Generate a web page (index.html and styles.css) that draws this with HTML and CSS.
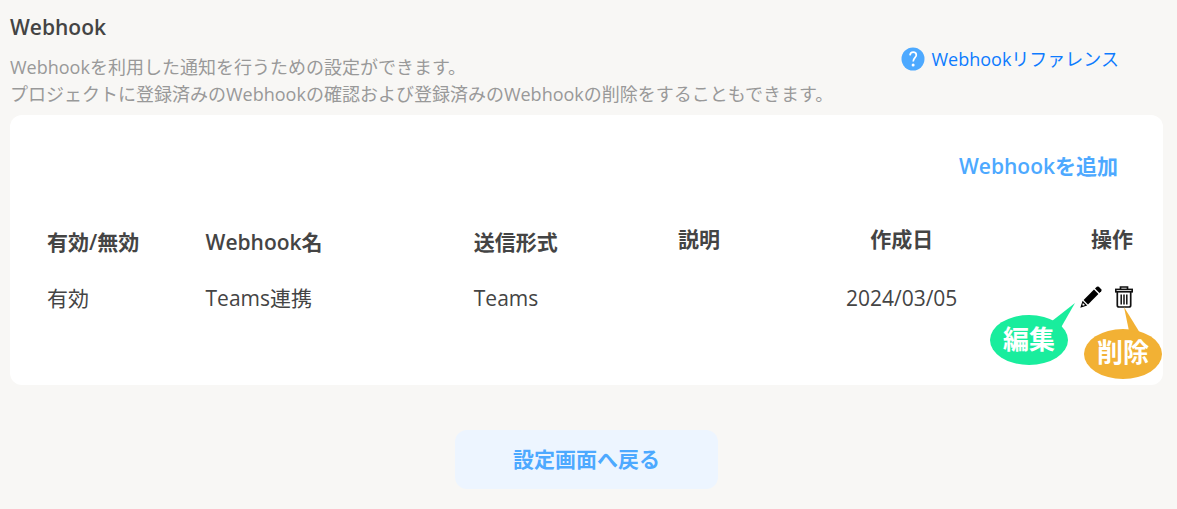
FILE: index.html
```html
<!DOCTYPE html>
<html lang="ja">
<head>
  <meta charset="UTF-8">
  <meta name="viewport" content="width=device-width, initial-scale=1.0">
  <title>Webhook</title>
  <link rel="stylesheet" href="styles.css">
</head>
<body>

  <header class="page-header">
    <div class="intro">
      <h1>Webhook</h1>
      <p>Webhookを利用した通知を行うための設定ができます。<br>プロジェクトに登録済みのWebhookの確認および登録済みのWebhookの削除をすることもできます。</p>
    </div>
    <a class="reference" href="#reference">
      <svg width="24" height="24" viewBox="0 0 24 24" aria-hidden="true">
        <circle cx="12" cy="12" r="11.5" fill="#4da9ff"/>
        <path d="M9 8.3C9.2 6.2 10.4 5.2 12.2 5.2C14.1 5.2 15.3 6.3 15.3 8C15.3 10.7 12.2 10.8 12.2 14.6" fill="none" stroke="#fff" stroke-width="1.7"/>
        <circle cx="12.1" cy="18" r="1.5" fill="#fff"/>
      </svg>
      Webhookリファレンス
    </a>
  </header>

  <main>
    <section class="card">
      <div class="card-top">
        <button type="button" class="add-button">Webhookを追加</button>
      </div>

      <table class="webhooks">
        <thead>
          <tr>
            <th class="status">有効/無効</th>
            <th class="name">Webhook名</th>
            <th class="format">送信形式</th>
            <th class="description">説明</th>
            <th class="created">作成日</th>
            <th class="operation">操作</th>
          </tr>
        </thead>
        <tbody>
          <tr>
            <td>有効</td>
            <td>Teams連携</td>
            <td>Teams</td>
            <td></td>
            <td class="created">2024/03/05</td>
            <td>
              <div class="actions">
                <div class="action">
                  <button type="button" class="icon-button" aria-label="編集">
                    <svg width="22" height="22" viewBox="0 0 22 22">
                      <path d="M15 2.6L19.4 7L21.2 5.2Q22 4.2 21.2 3.2L18.8 .8Q17.8 0 16.8 .8Z"/>
                      <path d="M14 3.6L18.4 8L8 18.4L3.6 14Z"/>
                      <path d="M2.6 14.8L7.2 19.4L.3 21.7Z"/>
                      <path d="M2.9 17L5 19.1L3 19.7L2.3 19Z" fill="#fff"/>
                    </svg>
                  </button>
                  <!-- Edit callout -->
                  <svg class="callout callout-edit" width="86" height="64" viewBox="0 0 86 64">
                    <ellipse cx="39" cy="38" rx="39" ry="25" fill="#19ed9d"/>
                    <path d="M62 19L85 1L69 29Z" fill="#19ed9d"/>
                    <text x="39" y="47" text-anchor="middle">編集</text>
                  </svg>
                </div>
                <div class="action">
                  <button type="button" class="icon-button" aria-label="削除">
                    <svg width="18" height="22" viewBox="0 0 18 22" fill="none" stroke="#111">
                      <path d="M5.5 3V1H12.5V3" stroke-width="1.7"/>
                      <rect x=".8" y="3.4" width="16.4" height="2.4" stroke-width="1.6"/>
                      <path d="M2.3 6V19.2Q2.3 21 4.1 21H13.9Q15.7 21 15.7 19.2V6" stroke-width="1.7"/>
                      <path d="M6.2 8.5V18.5M9 8.5V18.5M11.8 8.5V18.5" stroke-width="1.5"/>
                    </svg>
                  </button>
                  <!-- Delete callout -->
                  <svg class="callout callout-delete" width="78" height="74" viewBox="0 0 78 74">
                    <ellipse cx="39" cy="48" rx="39" ry="25" fill="#f2b134"/>
                    <path d="M40 1L45 25L56 27Z" fill="#f2b134"/>
                    <text x="39" y="56" text-anchor="middle">削除</text>
                  </svg>
                </div>
              </div>
            </td>
          </tr>
        </tbody>
      </table>
    </section>

    <div class="footer-actions">
      <button type="button" class="back-button">設定画面へ戻る</button>
    </div>
  </main>

</body>
</html>
```
FILE: styles.css
```css
* {
  box-sizing: border-box;
}

body {
  margin: 0;
  padding: 12px 14px 20px 10px;
  background: #f8f7f5;
  color: #444;
  font-family: "Open Sans", "Noto Sans CJK JP", sans-serif;
  font-size: 21px;
  line-height: 30px;
}

button {
  padding: 0;
  border: none;
  background: none;
  font: inherit;
  cursor: pointer;
}

/* Page header */
.page-header {
  display: flex;
  justify-content: space-between;
  align-items: flex-start;
  padding-right: 44px;
  padding-bottom: 7px;
}

h1 {
  margin: 0 0 12px;
  font-size: 21px;
  font-weight: 600;
}

.intro p {
  margin: 0;
  color: #999;
  font-size: 18px;
  line-height: 27px;
}

.reference {
  display: flex;
  align-items: center;
  gap: 6px;
  margin-top: 32px;
  color: #0d7bff;
  font-size: 18px;
  text-decoration: none;
  white-space: nowrap;
}

/* Card */
.card {
  min-height: 270px;
  padding: 36px 30px 0 37px;
  background: #fff;
  border-radius: 12px;
}

.card-top {
  display: flex;
  justify-content: flex-end;
  padding-right: 15px;
}

.add-button,
.back-button {
  color: #4da9ff;
  font-weight: 600;
}

/* Webhook list */
.webhooks {
  width: 100%;
  margin-top: 43px;
  border-collapse: collapse;
  table-layout: fixed;
}

.webhooks th,
.webhooks td {
  padding: 0;
  text-align: left;
}

.webhooks th {
  height: 33px;
  font-weight: 600;
  vertical-align: top;
}

.webhooks td {
  padding-top: 26px;
}

.webhooks .status {
  width: 14.6%;
  vertical-align: bottom;
}

.webhooks .name {
  width: 24.7%;
  vertical-align: bottom;
}

.webhooks .format {
  width: 18.8%;
  vertical-align: bottom;
}

.webhooks .description {
  width: 13.2%;
}

.webhooks .created {
  width: 14.8%;
  text-align: center;
}

.webhooks .operation {
  text-align: right;
}

.actions {
  display: flex;
  justify-content: flex-end;
  gap: 13px;
  padding-bottom: 2px;
}

.action {
  position: relative;
  display: flex;
}

.icon-button svg {
  display: block;
}

/* Callouts sit over the card, below the icons */
.callout {
  position: absolute;
  pointer-events: none;
}

.callout-edit {
  top: 16px;
  right: 26px;
}

.callout-delete {
  top: 20px;
  right: -29px;
}

.callout text {
  fill: #fff;
  font-size: 26px;
  font-weight: 700;
}

/* Back button */
.footer-actions {
  display: flex;
  justify-content: center;
  margin-top: 45px;
}

.back-button {
  padding: 14px 58px 15px;
  background: #edf5ff;
  border-radius: 12px;
}
```
